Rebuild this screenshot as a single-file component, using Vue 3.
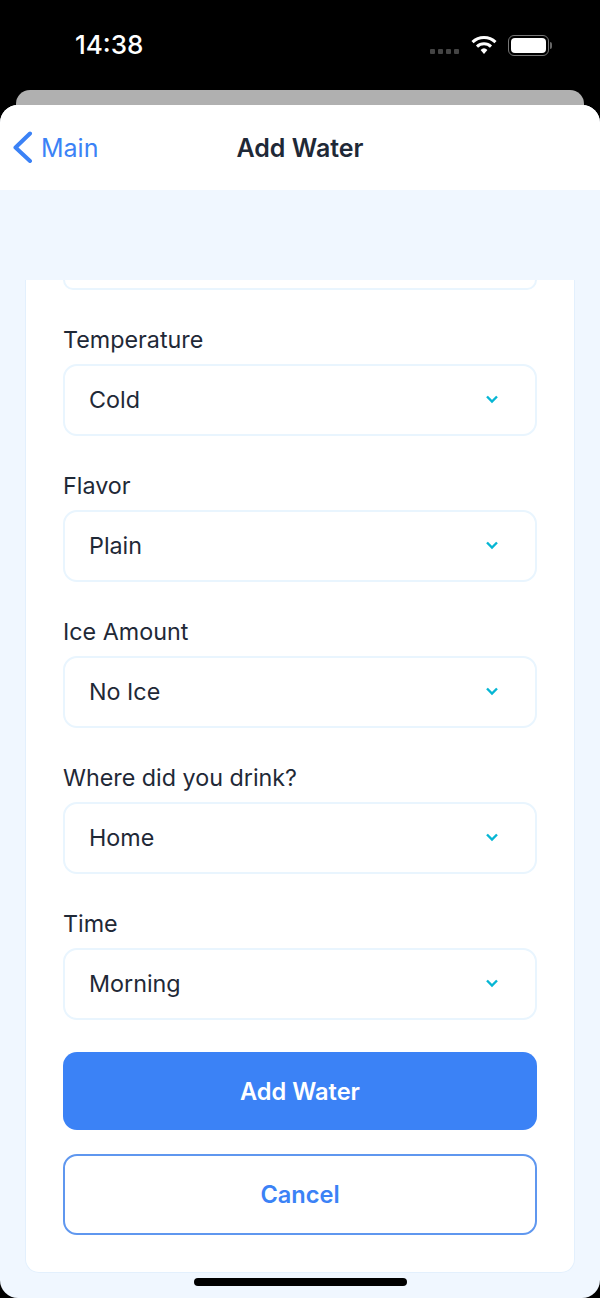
<template>
  <div class="screen">
    <div class="status-bar">
      <span class="clock">14:38</span>
      <div class="status-icons">
        <div class="signal"><i v-for="n in 4" :key="n"></i></div>
        <svg class="wifi" width="26" height="20" viewBox="0 0 26 20">
          <path d="M1.5 7.2a16.5 16.5 0 0 1 23 0" />
          <path d="M6 11.6a10 10 0 0 1 14 0" />
          <path class="wifi-dot" d="M9.6 14.9a5 5 0 0 1 6.8 0L13 19z" />
        </svg>
        <div class="battery"><div class="battery-fill"></div></div>
        <div class="battery-cap"></div>
      </div>
    </div>
    <div class="peek"></div>
    <div class="sheet">
      <header class="nav">
        <a class="back">
          <svg width="22" height="32" viewBox="0 0 22 32">
            <path d="M19 2.5 4.5 16.5 19 30" />
          </svg>
          <span>Main</span>
        </a>
        <h1>Add Water</h1>
      </header>
      <main class="content">
        <div class="card">
          <div class="stub"></div>
          <div v-for="field in fields" :key="field.label" class="field">
            <label>{{ field.label }}</label>
            <div class="select">
              <span>{{ field.value }}</span>
              <svg width="14" height="10" viewBox="0 0 14 10">
                <path d="M2 2.5 7 7.5 12 2.5" />
              </svg>
            </div>
          </div>
          <button class="btn primary">Add Water</button>
          <button class="btn outline">Cancel</button>
        </div>
        <div class="home-bar"></div>
      </main>
    </div>
  </div>
</template>

<script setup>
const fields = [
  { label: 'Temperature', value: 'Cold' },
  { label: 'Flavor', value: 'Plain' },
  { label: 'Ice Amount', value: 'No Ice' },
  { label: 'Where did you drink?', value: 'Home' },
  { label: 'Time', value: 'Morning' },
]
</script>

<style>
body {
  background: #000;
}
</style>

<style scoped>
.screen {
  width: 600px;
  height: 1298px;
  background: #000;
  overflow: hidden;
  font-family: Inter, 'Noto Sans', sans-serif;
}
.status-bar {
  height: 90px;
  display: flex;
  justify-content: space-between;
  padding: 29px 48px 0 75px;
  box-sizing: border-box;
  color: #fff;
}
.clock {
  font-size: 26px;
  line-height: 32px;
  font-weight: 500;
}
.status-icons {
  display: flex;
  align-items: flex-start;
  height: 32px;
}
.signal {
  display: flex;
  gap: 3px;
  margin-top: 20px;
  margin-right: 12px;
}
.signal i {
  width: 5px;
  height: 5px;
  border-radius: 1px;
  background: #444;
}
.wifi {
  margin-top: 6px;
  margin-right: 11px;
}
.wifi path {
  fill: none;
  stroke: #fff;
  stroke-width: 3;
}
.wifi .wifi-dot {
  fill: #fff;
  stroke: none;
}
.battery {
  width: 41px;
  height: 21px;
  margin-top: 6px;
  border: 1.5px solid #777;
  border-radius: 6px;
  box-sizing: border-box;
  padding: 2px;
}
.battery-fill {
  height: 100%;
  background: #fff;
  border-radius: 4px;
}
.battery-cap {
  width: 2px;
  height: 7px;
  margin-top: 13px;
  margin-left: 1px;
  background: #666;
  border-radius: 0 2px 2px 0;
}
.peek {
  height: 15px;
  margin: 0 16px;
  background: #b0b0b0;
  border-radius: 14px 14px 0 0;
}
.sheet {
  height: 1193px;
  background: #f0f7ff;
  border-radius: 18px;
  overflow: hidden;
  display: flex;
  flex-direction: column;
}
.nav {
  height: 85px;
  flex: none;
  background: #fff;
  display: flex;
  align-items: center;
  justify-content: center;
  position: relative;
}
.nav h1 {
  margin: 0;
  font-size: 25px;
  font-weight: 600;
  color: #1f2937;
}
.back {
  position: absolute;
  left: 11px;
  top: 26px;
  display: flex;
  align-items: center;
  gap: 8px;
  color: #3b82f6;
  font-size: 25px;
}
.back span {
  margin-top: 2px;
}
.back svg path {
  fill: none;
  stroke: #3b82f6;
  stroke-width: 4;
  stroke-linecap: round;
  stroke-linejoin: round;
}
.content {
  flex: 1;
  padding-top: 90px;
  position: relative;
}
.card {
  margin: 0 25px;
  height: 993px;
  box-sizing: border-box;
  padding: 0 37px;
  background: #fff;
  border: 1px solid #e3f0fd;
  border-top: none;
  border-radius: 0 0 14px 14px;
}
.stub {
  height: 8px;
  border: 2px solid #e9f5fe;
  border-top: none;
  border-radius: 0 0 14px 14px;
  margin-bottom: 32px;
}
.field {
  height: 146px;
}
.field label {
  display: block;
  height: 34px;
  padding-top: 1px;
  box-sizing: border-box;
  line-height: 34px;
  font-size: 23.3px;
  color: #1f2937;
}
.select {
  height: 72px;
  margin-top: 8px;
  box-sizing: border-box;
  border: 2px solid #e9f5fe;
  border-radius: 14px;
  padding: 0 36px 2px 24px;
  display: flex;
  align-items: center;
  justify-content: space-between;
  font-size: 23.3px;
  color: #1f2937;
}
.select svg path {
  fill: none;
  stroke: #06b6d4;
  stroke-width: 2.4;
}
.btn {
  display: block;
  width: 100%;
  box-sizing: border-box;
  font-family: inherit;
  font-size: 23.6px;
  font-weight: 600;
  border-radius: 14px;
}
.primary {
  height: 78px;
  background: #3b82f6;
  border: none;
  color: #fff;
}
.outline {
  height: 81px;
  margin-top: 24px;
  background: #fff;
  border: 2px solid #5f97ef;
  color: #3b82f6;
}
.home-bar {
  position: absolute;
  left: 194px;
  bottom: 12px;
  width: 213px;
  height: 8px;
  background: #000;
  border-radius: 4px;
}
</style>
